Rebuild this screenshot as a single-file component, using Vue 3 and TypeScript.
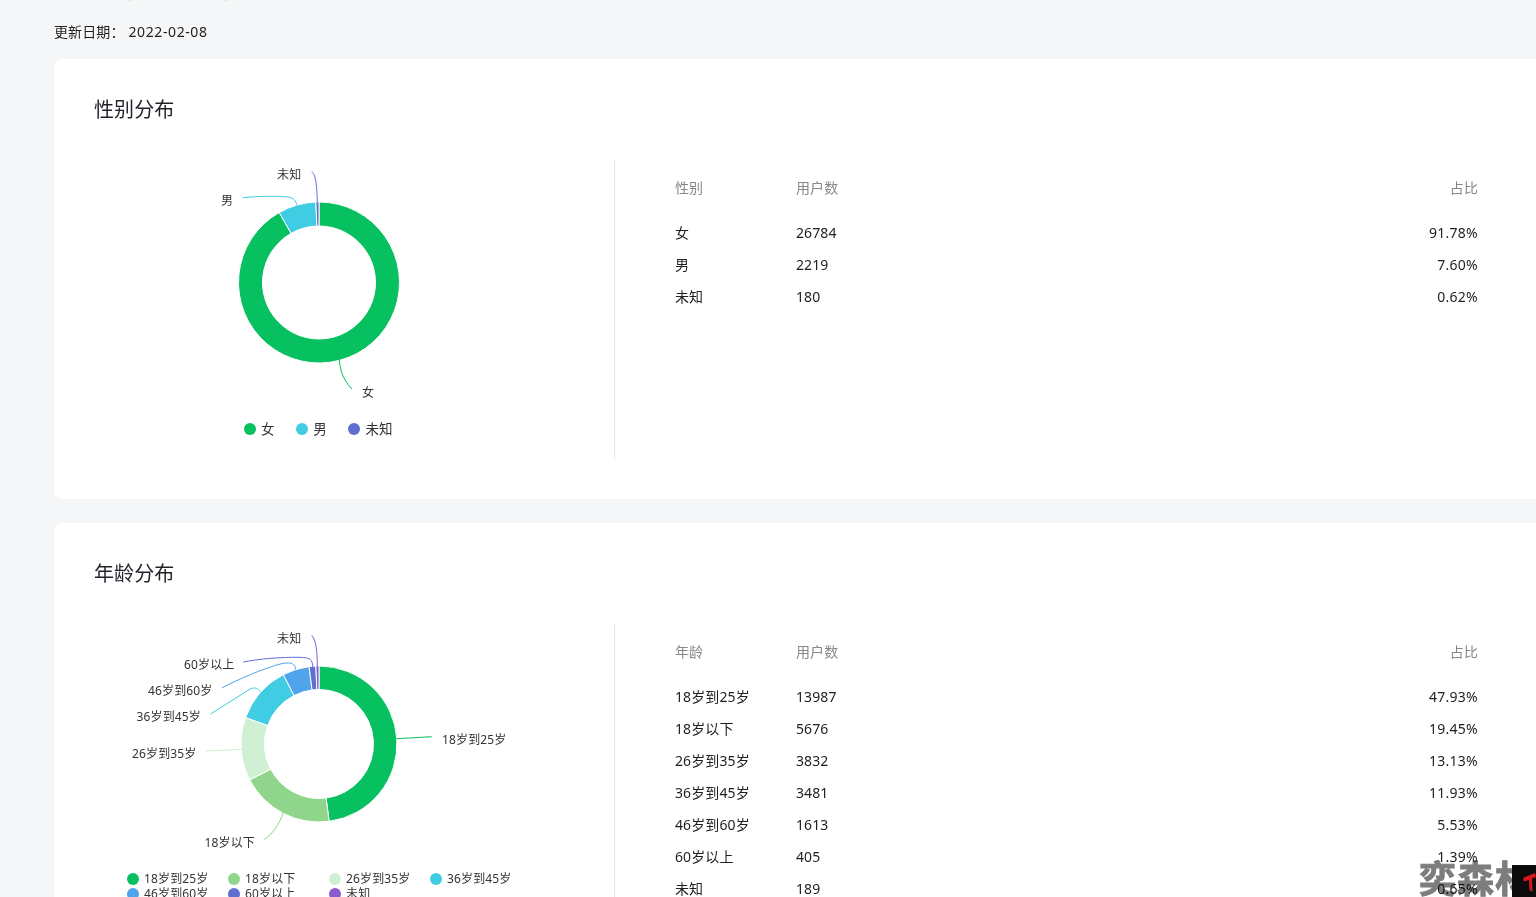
<script setup lang="ts">
interface Slice { name: string; users: number; pct: string; color: string }
interface Leader { d: string; color: string }
interface Label { text: string; x: number; y: number }

const CX = 225

const gender: Slice[] = [
  { name: '女', users: 26784, pct: '91.78%', color: '#07c160' },
  { name: '男', users: 2219, pct: '7.60%', color: '#40cde3' },
  { name: '未知', users: 180, pct: '0.62%', color: '#5f6fd0' },
]
const age: Slice[] = [
  { name: '18岁到25岁', users: 13987, pct: '47.93%', color: '#07c160' },
  { name: '18岁以下', users: 5676, pct: '19.45%', color: '#8fd68c' },
  { name: '26岁到35岁', users: 3832, pct: '13.13%', color: '#d0f0d4' },
  { name: '36岁到45岁', users: 3481, pct: '11.93%', color: '#40cde3' },
  { name: '46岁到60岁', users: 1613, pct: '5.53%', color: '#50a4ec' },
  { name: '60岁以上', users: 405, pct: '1.39%', color: '#5f6fd0' },
  { name: '未知', users: 189, pct: '0.65%', color: '#8a5bce' },
]

function arcs(data: Slice[], cx: number, cy: number, R: number, r: number) {
  let a = 0
  return data.map((s) => {
    const sweep = (parseFloat(s.pct) / 100) * Math.PI * 2
    const b = a + sweep
    const p = (rad: number, ang: number) =>
      `${(cx + rad * Math.sin(ang)).toFixed(2)} ${(cy - rad * Math.cos(ang)).toFixed(2)}`
    const large = sweep > Math.PI ? 1 : 0
    const d = `M${p(R, a)}A${R} ${R} 0 ${large} 1 ${p(R, b)}L${p(r, b)}A${r} ${r} 0 ${large} 0 ${p(r, a)}Z`
    a = b
    return { d, color: s.color }
  })
}

const genderArcs = arcs(gender, CX, 123.5, 80.5, 56.5)
const ageArcs = arcs(age, CX, 121, 78, 54.5)

const genderLines: Leader[] = [
  { d: 'M245.3 201C246 212 250 222 258 230', color: '#07c160' },
  { d: 'M148.7 38.7C165 37 185 37 194 38C200 39 202 42 202.7 46', color: '#40cde3' },
  { d: 'M217.7 12.7C221 14 223 24 223.3 43.7', color: '#5f6fd0' },
]
const genderLabels: Label[] = [
  { text: '女', x: 268, y: 238 },
  { text: '男', x: 127, y: 46 },
  { text: '未知', x: 183, y: 20 },
]
const ageLines: Leader[] = [
  { d: 'M302.7 115.7L337.7 113.7', color: '#07c160' },
  { d: 'M189.3 189.7C186 200 178 212 170.3 216.3', color: '#8fd68c' },
  { d: 'M147.7 126.3L112 128', color: '#d0f0d4' },
  { d: 'M166 68.7C164 65 161 64 156 66L116.7 91', color: '#40cde3' },
  { d: 'M201.7 46.3C201 41 198 39 189 40.3C170 45 145 56 127.7 65', color: '#50a4ec' },
  { d: 'M218.7 43.7C218 36 217 35 206 34.3C185 34 165 36 149.3 39', color: '#5f6fd0' },
  { d: 'M223.3 43.7C223.3 28 222 17 217.7 12.3', color: '#8a5bce' },
]
const ageLabels: Label[] = [
  { text: '18岁到25岁', x: 348, y: 121 },
  { text: '18岁以下', x: 110.5, y: 224 },
  { text: '26岁到35岁', x: 38, y: 135 },
  { text: '36岁到45岁', x: 42.5, y: 98 },
  { text: '46岁到60岁', x: 54, y: 72 },
  { text: '60岁以上', x: 90, y: 46 },
  { text: '未知', x: 183, y: 20 },
]

const sections = [
  {
    title: '性别分布', column: '性别', data: gender, arcs: genderArcs,
    lines: genderLines, labels: genderLabels, legendClass: 'legend-gender',
  },
  {
    title: '年龄分布', column: '年龄', data: age, arcs: ageArcs,
    lines: ageLines, labels: ageLabels, legendClass: 'legend-age',
  },
]
</script>

<template>
  <div class="page">
    <div class="ticks"><i></i><i></i></div>
    <div class="update">
      <span>更新日期：</span><span class="date">2022-02-08</span>
    </div>

    <section v-for="s in sections" :key="s.title" class="card">
      <h2 class="title">{{ s.title }}</h2>
      <div class="body">
        <div class="chart">
          <svg class="plot" width="520" height="244" viewBox="0 0 520 244">
            <path v-for="(a, i) in s.arcs" :key="i" :d="a.d" :fill="a.color" stroke="#fff" stroke-width="1" />
            <path v-for="(l, i) in s.lines" :key="'l' + i" :d="l.d" :stroke="l.color" fill="none" stroke-width="1" />
            <text v-for="t in s.labels" :key="t.text" :x="t.x" :y="t.y" class="label">{{ t.text }}</text>
          </svg>
          <ul class="legend" :class="s.legendClass">
            <li v-for="d in s.data" :key="d.name">
              <span class="dot" :style="{ background: d.color }"></span>{{ d.name }}
            </li>
          </ul>
        </div>
        <div class="table">
          <div class="row head">
            <span>{{ s.column }}</span><span>用户数</span><span class="right">占比</span>
          </div>
          <div v-for="d in s.data" :key="d.name" class="row">
            <span>{{ d.name }}</span><span>{{ d.users }}</span><span class="right pct">{{ d.pct }}</span>
          </div>
        </div>
      </div>
    </section>

    <div class="mark">
      <span class="mark-text">奕森林</span>
      <svg class="mark-logo" width="24" height="32" viewBox="0 0 24 32">
        <rect width="24" height="32" fill="#0b0b0b" />
        <path d="M11 13L23 8L24 12L20 13.500L20.500 27L17.500 25L17 15L12 16.500Z" fill="#d8161c" />
      </svg>
    </div>
  </div>
</template>

<style>
html, body { margin: 0; height: 100%; overflow: hidden; background: #f5f6f8; }
</style>

<style scoped>
.page {
  position: relative;
  width: 1536px;
  height: 897px;
  overflow: hidden;
  box-sizing: border-box;
  padding-left: 54px;
  background: #f5f6f8;
  color: #1f1f1f;
  font-family: "Noto Sans", "Noto Sans CJK SC", sans-serif;
  font-size: 14px;
  letter-spacing: 0.1px;
}
.ticks { height: 1px; display: flex; gap: 95px; padding-left: 75px; }
.ticks i { width: 1px; height: 1px; background: #c8c8c8; }
.update { height: 58px; display: flex; align-items: center; line-height: 20px; padding-top: 4px; box-sizing: border-box; }
.date { margin-left: 4px; letter-spacing: 0.6px; }
.card {
  width: 1530px;
  height: 440px;
  box-sizing: border-box;
  margin-bottom: 24px;
  padding: 40px;
  background: #fff;
  border-radius: 8px;
}
.title {
  margin: 0 0 40px;
  font-size: 20px;
  line-height: 22px;
  height: 20px;
  font-weight: 400;
  color: #1f2329;
}
.body { display: flex; height: 300px; }
.chart {
  width: 520px;
  flex: none;
  border-right: 1px solid #e5e6e8;
}
.plot { display: block; }
.label { font-size: 12px; fill: #333; letter-spacing: 0.15px; }
.legend { list-style: none; margin: 0; padding: 0; display: flex; }
.legend li { display: flex; align-items: center; white-space: nowrap; color: #333; }
.dot { width: 12px; height: 12px; border-radius: 50%; margin-right: 5px; flex: none; }
.legend-gender { margin-top: 16px; padding-left: 150px; gap: 21.6px; font-size: 13.5px; line-height: 20px; }
.legend-age { margin-top: 4px; padding-left: 33px; flex-wrap: wrap; width: 404px; font-size: 12px; line-height: 15px; letter-spacing: 0.15px; }
.legend-age li { width: 101px; }
.table { width: 803px; margin-left: 60px; padding-top: 12px; }
.row {
  display: grid;
  grid-template-columns: 121px 1fr 1fr;
  height: 32px;
  align-items: center;
}
.head { color: #86888c; margin-bottom: 13px; }
.right { text-align: right; }
.pct { letter-spacing: 0.25px; }
.mark {
  position: absolute;
  right: 0;
  bottom: 0;
  display: flex;
  align-items: flex-end;
  height: 40px;
  mix-blend-mode: multiply;
}
.mark-text {
  font-size: 37px;
  line-height: 40px;
  font-weight: 700;
  letter-spacing: 1px;
  color: #7d7d7d;
  -webkit-text-stroke: 1px #7d7d7d;
  font-family: "Noto Sans CJK SC", sans-serif;
  width: 93px;
  overflow: hidden;
  white-space: nowrap;
}
.mark-logo { display: block; }
</style>
